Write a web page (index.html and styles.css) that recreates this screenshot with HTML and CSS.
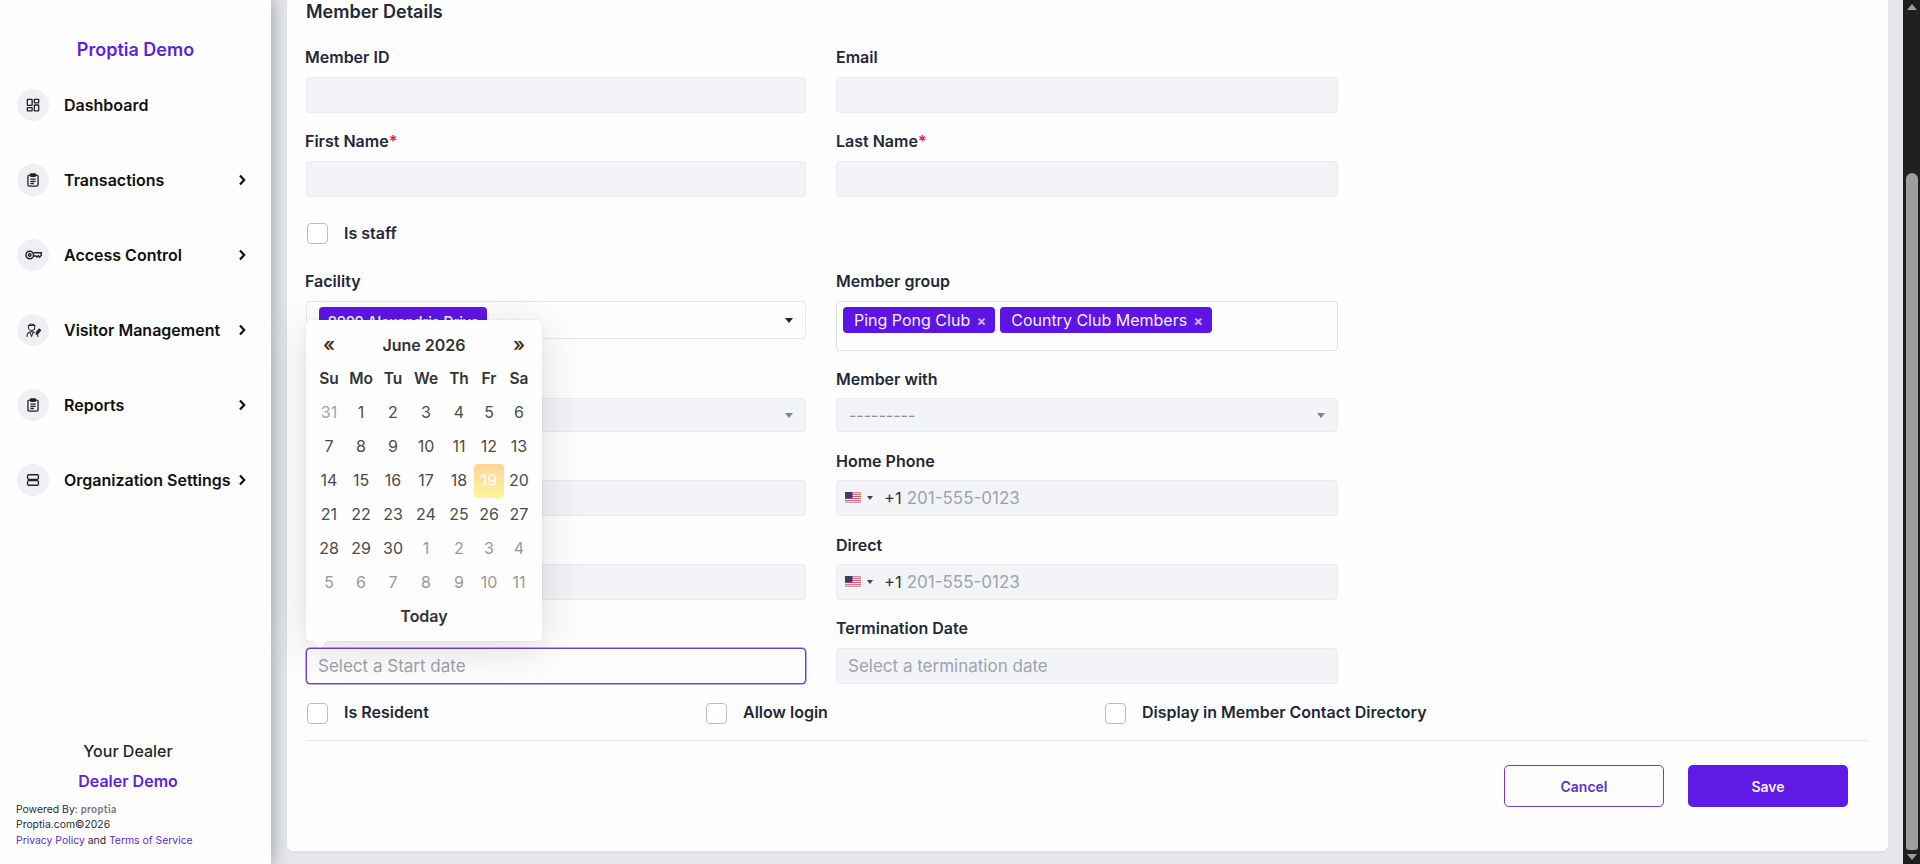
FILE: index.html
```html
<!DOCTYPE html>
<html lang="en">
<head>
<meta charset="utf-8">
<title>Member Details</title>
<link rel="stylesheet" href="styles.css">
</head>
<body>
<div class="app">
  <aside class="sidebar">
    <div class="brand">Proptia Demo</div>
    <nav class="nav">
      <a class="nav-item"><span class="nav-icon"><svg viewBox="0 0 16 16" class="ico"><rect x="1.5" y="1.5" width="5.5" height="7" rx=".5"/><rect x="9.5" y="1.5" width="5" height="4" rx=".5"/><rect x="1.5" y="11" width="5.5" height="3.8" rx=".5"/><rect x="9.5" y="8" width="5" height="6.8" rx=".5"/></svg></span><span class="nav-label">Dashboard</span></a>
      <a class="nav-item"><span class="nav-icon"><svg viewBox="0 0 16 16" class="ico"><rect x="2.2" y="2.5" width="11.6" height="12.5" rx="1.6"/><rect x="5.2" y="1" width="5.6" height="2.8" rx=".7" class="ico-solid"/><path d="M5 7h6M5 9.5h6M5 12h4"/></svg></span><span class="nav-label">Transactions</span><svg class="chev" viewBox="0 0 8 12"><path d="M2 1.5 6.2 6 2 10.5"/></svg></a>
      <a class="nav-item"><span class="nav-icon"><svg viewBox="0 0 18 12" class="ico ico-key"><circle cx="5" cy="6" r="4"/><circle cx="5" cy="6" r="1.3"/><path d="M9 3.6h8.2v2.6l-1.6 2-1.4-1.4-1.4 1.4-1.2-1.2H9"/></svg></span><span class="nav-label">Access Control</span><svg class="chev" viewBox="0 0 8 12"><path d="M2 1.5 6.2 6 2 10.5"/></svg></a>
      <a class="nav-item"><span class="nav-icon"><svg viewBox="0 0 18 18" class="ico ico-wide"><circle cx="7" cy="5.5" r="3.4"/><path d="M3 3.6h8M2 16c0-3.4 1.6-5.6 5-5.6 1.4 0 2.4.3 3.2 1M5 10.8 7 15l1.6-4"/><path d="m12 11 3-3.5 1.6 1.4-3 3.6-1.9.5z" class="ico-solid"/><path d="M13.5 13v3"/></svg></span><span class="nav-label">Visitor Management</span><svg class="chev" viewBox="0 0 8 12"><path d="M2 1.5 6.2 6 2 10.5"/></svg></a>
      <a class="nav-item"><span class="nav-icon"><svg viewBox="0 0 16 16" class="ico"><rect x="2.2" y="2.5" width="11.6" height="12.5" rx="1.6"/><rect x="5.2" y="1" width="5.6" height="2.8" rx=".7" class="ico-solid"/><path d="M5 7h6M5 9.5h6M5 12h4"/></svg></span><span class="nav-label">Reports</span><svg class="chev" viewBox="0 0 8 12"><path d="M2 1.5 6.2 6 2 10.5"/></svg></a>
      <a class="nav-item"><span class="nav-icon"><svg viewBox="0 0 16 16" class="ico"><rect x="1.8" y="2" width="12.4" height="5.2" rx="1.4"/><rect x="1.8" y="8.8" width="12.4" height="5.2" rx="1.4"/></svg></span><span class="nav-label">Organization Settings</span><svg class="chev" viewBox="0 0 8 12"><path d="M2 1.5 6.2 6 2 10.5"/></svg></a>
    </nav>
    <div class="dealer">
      <div class="dealer-title">Your Dealer</div>
      <div class="dealer-name">Dealer Demo</div>
    </div>
    <div class="legal">
      <div>Powered By: <span class="wordmark">proptia</span></div>
      <div>Proptia.com©2026</div>
      <div><a class="legal-link">Privacy Policy</a> and <a class="legal-link">Terms of Service</a></div>
    </div>
  </aside>

  <main class="main">
    <section class="card">
      <h2 class="card-title">Member Details</h2>
      <div class="form-grid">
        <div class="field"><label class="label label-left">Member ID</label><div class="input"></div></div>
        <div class="field"><label class="label">Email</label><div class="input"></div></div>
        <div class="field"><label class="label label-left">First Name<span class="req">*</span></label><div class="input"></div></div>
        <div class="field"><label class="label">Last Name<span class="req">*</span></label><div class="input"></div></div>
        <div class="check-row full"><span class="check"></span><span class="check-label">Is staff</span></div>

        <div class="field"><label class="label label-left">Facility</label>
          <div class="input input-white input-facility"><span class="chip chip-facility">9999 Alexandria Drive</span><span class="caret caret-dark"></span></div>
        </div>
        <div class="field"><label class="label">Member group</label>
          <div class="input input-white input-group"><span class="chip">Ping Pong Club <span class="chip-x">×</span></span><span class="chip">Country Club Members <span class="chip-x">×</span></span></div>
        </div>

        <div class="field field-tight"><label class="label"></label><div class="input input-short"><span class="caret"></span></div></div>
        <div class="field field-tight"><label class="label">Member with</label><div class="input input-short"><span class="dashes">---------</span><span class="caret"></span></div></div>

        <div class="field field-phone"><label class="label"></label><div class="input"></div></div>
        <div class="field field-phone"><label class="label">Home Phone</label>
          <div class="input"><svg class="flag" viewBox="0 0 16 11" preserveAspectRatio="none"><rect width="16" height="11" fill="#fff"/><path d="M0 .8h16M0 2.5h16M0 4.2h16M0 5.9h16M0 7.6h16M0 9.3h16" stroke="#c8475a" stroke-width=".9"/><rect width="7.5" height="5.9" fill="#3c3b6e"/></svg><span class="mini-caret"></span><span class="dial">+1</span><span class="ph">201-555-0123</span></div>
        </div>

        <div class="field field-direct"><label class="label"></label><div class="input"></div></div>
        <div class="field field-direct"><label class="label">Direct</label>
          <div class="input"><svg class="flag" viewBox="0 0 16 11" preserveAspectRatio="none"><rect width="16" height="11" fill="#fff"/><path d="M0 .8h16M0 2.5h16M0 4.2h16M0 5.9h16M0 7.6h16M0 9.3h16" stroke="#c8475a" stroke-width=".9"/><rect width="7.5" height="5.9" fill="#3c3b6e"/></svg><span class="mini-caret"></span><span class="dial">+1</span><span class="ph">201-555-0123</span></div>
        </div>

        <div class="field"><label class="label">Start Date</label>
          <div class="date-wrap">
            <div class="input input-white input-focus"><span class="ph ph-date">Select a Start date</span></div>
            <div class="picker">
              <div class="cal">
                <span class="cal-nav">«</span><span class="cal-month">June 2026</span><span class="cal-nav">»</span>
                <b>Su</b><b>Mo</b><b>Tu</b><b>We</b><b>Th</b><b>Fr</b><b>Sa</b>
                <i class="faint">31</i><i>1</i><i>2</i><i>3</i><i>4</i><i>5</i><i>6</i>
                <i>7</i><i>8</i><i>9</i><i>10</i><i>11</i><i>12</i><i>13</i>
                <i>14</i><i>15</i><i>16</i><i>17</i><i>18</i><i class="today">19</i><i>20</i>
                <i>21</i><i>22</i><i>23</i><i>24</i><i>25</i><i>26</i><i>27</i>
                <i>28</i><i>29</i><i>30</i><i class="old">1</i><i class="old">2</i><i class="old">3</i><i class="old">4</i>
                <i class="old">5</i><i class="old">6</i><i class="old">7</i><i class="old">8</i><i class="old">9</i><i class="old">10</i><i class="old">11</i>
                <span class="cal-today">Today</span>
              </div>
            </div>
          </div>
        </div>
        <div class="field"><label class="label">Termination Date</label><div class="input"><span class="ph ph-date">Select a termination date</span></div></div>
      </div>

      <div class="options">
        <div class="check-row"><span class="check"></span><span class="check-label">Is Resident</span></div>
        <div class="check-row"><span class="check"></span><span class="check-label">Allow login</span></div>
        <div class="check-row"><span class="check"></span><span class="check-label">Display in Member Contact Directory</span></div>
      </div>
      <hr class="rule">
      <div class="actions">
        <button class="btn btn-outline">Cancel</button>
        <button class="btn btn-solid">Save</button>
      </div>
    </section>
  </main>

  <div class="scrollbar">
    <span class="sb-arrow sb-up"></span>
    <span class="sb-track"><span class="sb-thumb"></span></span>
    <span class="sb-arrow sb-down"></span>
  </div>
</div>
</body>
</html>
```

FILE: styles.css
```css
* { box-sizing: border-box; }
html, body { margin: 0; height: 100%; overflow: hidden; }
body { font-family: Inter, "Noto Sans", "Liberation Sans", sans-serif; color: #1f2937; background: #e5e7eb; }

.app { display: flex; height: 864px; }

/* Sidebar */
.sidebar {
  width: 271px; flex: none; background: #fefefe; display: flex; flex-direction: column;
  box-shadow: 3px 0 14px rgba(50, 55, 70, .35); position: relative; z-index: 2;
}
.brand { margin-top: 39px; height: 22px; line-height: 22px; text-align: center; font-size: 18px; font-weight: 600; color: #5f1ee0; }
.nav { margin-top: 28px; display: flex; flex-direction: column; gap: 43px; padding: 0 25px 0 17px; }
.nav-item { display: flex; align-items: center; height: 32px; }
.nav-icon { width: 32px; height: 32px; border-radius: 50%; background: #eef0f3; display: flex; align-items: center; justify-content: center; flex: none; }
.nav-label { margin-left: 15px; flex: 1; font-size: 16px; font-weight: 600; color: #111; white-space: nowrap; }
.ico { width: 14px; height: 14px; fill: none; stroke: #222; stroke-width: 1.5; }
.ico-key { width: 17px; height: 12px; }
.ico-wide { width: 17px; height: 17px; stroke-width: 1.1; }
.ico-solid { fill: #222; }
.chev { width: 8px; height: 12px; fill: none; stroke: #111; stroke-width: 2.2; flex: none; }

.dealer { margin-top: auto; width: 256px; text-align: center; }
.dealer-title { font-size: 16px; font-weight: 500; color: #262626; line-height: 20px; }
.dealer-name { margin-top: 10px; font-size: 16px; font-weight: 600; color: #5f1ee0; line-height: 20px; }
.legal { margin-top: 11px; padding: 0 0 16px 16px; font-size: 10.4px; line-height: 15.5px; color: #2a2a2a; }
.legal-link { color: #5a2dc8; }
.wordmark { font-family: Lato, sans-serif; font-weight: 700; color: #777; letter-spacing: .4px; }

/* Main */
.main { flex: 1; min-width: 0; padding: 0 15px 13px 16px; }
.card {
  height: 851px; background: #fefefe; border-radius: 0 0 6px 6px; padding: 0 20px 0 19px;
  box-shadow: 0 1px 3px rgba(0, 0, 0, .05);
}
.card-title { margin: 0 0 23px; height: 24px; line-height: 24px; font-size: 18px; font-weight: 600; color: #1f2937; }

.form-grid { display: grid; grid-template-columns: 500px 502px; column-gap: 30px; align-items: start; }
.full { grid-column: 1 / -1; }
.field { margin-bottom: 18px; min-width: 0; }
.label { display: block; height: 20px; line-height: 21px; margin-bottom: 10px; font-size: 16px; font-weight: 600; color: #1f2937; }
.label-left { margin-left: -1px; }
.req { color: #e11d48; }
.input {
  height: 36px; background: #f3f4f7; border: 1px solid #e9ebef; border-radius: 4px;
  display: flex; align-items: center; position: relative; font-size: 16px;
}
.input-white { background: #fefefe; border-color: #e5e7eb; }
.input-focus { border-color: #6f3fd0; box-shadow: 0 0 0 .5px #7b4fd6; }
.input-facility { height: 38px; align-items: flex-start; padding: 5px 0 0 12px; }
.input-group { height: 50px; align-items: flex-start; padding: 5px 0 0 6px; gap: 5px; border-color: #dcdfe4; }
.input-short { height: 34px; }
.field-tight .label, .field-phone .label, .field-direct .label { margin-bottom: 9px; }
.field-tight, .field-phone { margin-bottom: 19px; }

.chip { height: 26px; line-height: 26px; padding: 0 9px 0 11px; background: #5f14e6; color: #f3eefe; border-radius: 4px; font-size: 16px; white-space: nowrap; }
.chip-x { color: #c9b5f5; font-weight: 700; margin-left: 2px; font-size: 14px; }
.chip-facility { font-weight: 600; font-size: 14px; padding: 0 9px; width: 168px; height: 30px; line-height: 30px; }
.caret { position: absolute; right: 12px; top: 50%; margin-top: -2px; border: 4px solid transparent; border-top: 5px solid #7b8494; border-bottom: 0; }
.caret-dark { border-top-color: #222; }
.dashes { margin-left: 12px; color: #8b8f96; font-size: 16px; }
.flag { width: 16px; height: 12px; margin-left: 8px; flex: none; }
.mini-caret { margin-left: 6px; border: 3px solid transparent; border-top: 4px solid #444; border-bottom: 0; }
.dial { margin-left: 11px; color: #333; font-size: 16.5px; }
.ph { margin-left: 5px; color: #9ca3af; font-size: 17px; white-space: nowrap; }
.ph-date { margin-left: 11px; }

/* Check rows */
.check-row { display: flex; align-items: center; height: 22px; }
.form-grid > .check-row { margin: 7px 0 27px; }
.check { width: 21px; height: 21px; margin-left: 1px; border: 1px solid #b9bdc4; border-radius: 4px; background: #fff; flex: none; }
.check-label { margin-left: 16px; font-size: 16px; line-height: 20px; font-weight: 600; color: #1f2937; white-space: nowrap; }
.options .check-label { position: relative; top: -1px; }
.options { display: grid; grid-template-columns: 399px 399px 1fr; }
.rule { margin: 16px 0 24px; border: 0; border-top: 1px solid #e5e7eb; }

.actions { display: flex; justify-content: flex-end; gap: 24px; padding-right: 20px; }
.btn { width: 160px; height: 42px; border-radius: 5px; font: 600 14px Inter, "Noto Sans", sans-serif; }
.btn-outline { background: #fefefe; color: #6034c8; border: 1px solid #6d3bd1; }
.btn-solid { background: #5f1ae5; color: #f5f0ff; border: 0; }

/* Datepicker overlay */
.date-wrap { position: relative; }
.picker {
  position: absolute; left: 0; bottom: 100%; margin-bottom: 7px; width: 236px; padding: 8px 8px 7px 8px;
  background: #fefefe; border-radius: 4px; box-shadow: 0 8px 45px rgba(30, 35, 50, .16), 0 0 2px rgba(0, 0, 0, .12); z-index: 5;
}
.picker::after {
  content: ""; position: absolute; left: 7px; top: 100%; border: 7px solid transparent; border-top: 7px solid #fefefe; border-bottom: 0;
}
.cal { display: grid; grid-template-columns: 30px 34px 30px 36px 30px 30px 30px; grid-auto-rows: 34px; font-size: 16px; text-align: center; line-height: 34px; color: #4b4b4b; }
.cal b { font-weight: 600; color: #333; font-size: 15.5px; }
.cal i { font-style: normal; line-height: 33px; }
.cal-nav { font-weight: 600; font-size: 19px; color: #333; }
.cal-month { grid-column: span 5; font-weight: 600; color: #333; }
.cal-today { grid-column: 1 / -1; font-weight: 600; color: #333; line-height: 33px; }
.cal .faint { color: #a3a3a3; }
.cal .old { color: #999; }
.cal .today { color: #fff; background: linear-gradient(#fdd49a, #fdf59a); border-radius: 4px; }

/* Scrollbar */
.scrollbar { width: 17px; flex: none; background: #1f1f1f; display: flex; flex-direction: column; align-items: center; }
.sb-arrow { border: 5px solid transparent; flex: none; }
.sb-up { margin-top: 4px; border-top: 0; border-left-width: 5px; border-bottom: 6px solid #9e9e9e; }
.sb-down { margin: 4px 0 4px; border-bottom: 0; border-top: 6px solid #9e9e9e; }
.sb-track { flex: 1; width: 12px; display: flex; flex-direction: column; justify-content: flex-end; }
.sb-thumb { height: 677px; background: #9e9e9e; border-radius: 6px 6px 3px 3px; }
```
